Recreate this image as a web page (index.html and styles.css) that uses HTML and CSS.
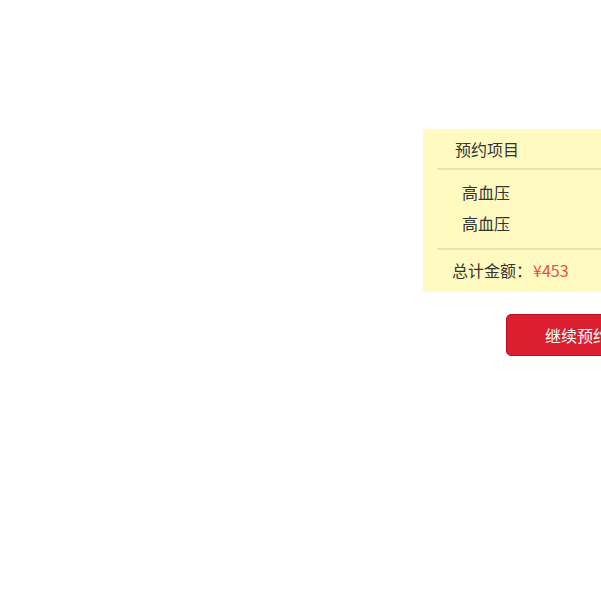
FILE: index.html
```html
<!DOCTYPE html>
<html lang="zh">
<head>
<meta charset="utf-8">
<link rel="stylesheet" href="styles.css">
</head>
<body>
<div class="wrap">
  <div class="panel">
    <div class="head">预约项目</div>
    <div class="items">
      <div class="item">高血压</div>
      <div class="item">高血压</div>
    </div>
    <div class="total">总计金额：<span class="price">¥453</span></div>
  </div>
  <div class="actions">
    <button class="btn">继续预约</button>
  </div>
</div>
</body>
</html>
```
FILE: styles.css
```css
html, body {
  margin: 0;
  padding: 0;
  overflow: hidden;
  background: #fff;
}
.wrap {
  padding: 129px 0 0 423px;
  width: 260px;
  font-family: "Noto Sans CJK SC", "Noto Sans", sans-serif;
  font-size: 16px;
  color: #333;
}
.panel {
  background: #fefac0;
  padding-left: 14px;
}
.head {
  height: 39px;
  line-height: 41px;
  padding-left: 18px;
  border-bottom: 2px solid #e9e4b3;
}
.items {
  padding: 7px 0 9px 25px;
  border-bottom: 2px solid #e9e4b3;
}
.item {
  line-height: 31px;
}
.total {
  height: 42px;
  line-height: 41px;
  padding-left: 15px;
}
.price {
  color: #ef4b4b;
  margin-left: 1px;
}
.actions {
  padding: 22px 0 0 83px;
}
.btn {
  width: 160px;
  height: 42px;
  background: #dc1f30;
  border: 1px solid #b8101f;
  border-radius: 5px;
  color: #fff;
  font-family: inherit;
  font-size: 16px;
  text-align: left;
  padding: 0 0 0 38px;
}
```
